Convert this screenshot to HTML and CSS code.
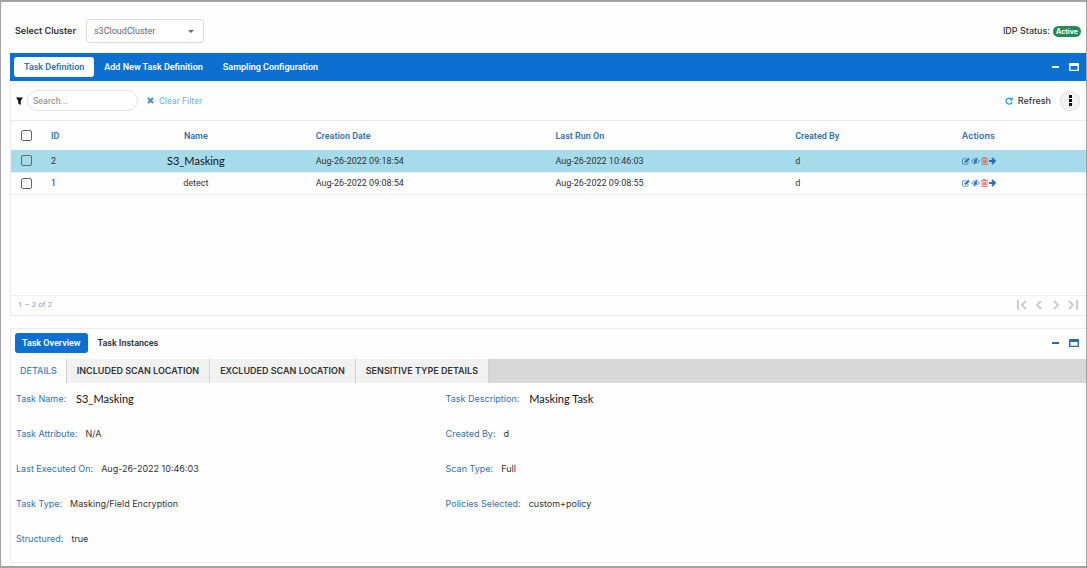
FILE: index.html
```html
<!DOCTYPE html>
<html lang="en">
<head>
    <meta charset="UTF-8">
    <meta name="viewport" content="width=device-width, initial-scale=1.0">
    <title>Task Definition</title>
    <link rel="stylesheet" href="styles.css">
</head>
<body>
    <svg class="sprite" aria-hidden="true">
        <symbol id="edit" viewBox="0 0 16 16">
            <path d="M12 9.5V13a1.5 1.5 0 0 1-1.500 1.500h-8A1.500 1.500 0 0 1 1 13V5a1.500 1.500 0 0 1 1.500-1.500H9" fill="none" stroke="currentColor" stroke-width="1.400"/>
            <path d="M5.500 11.500V8.500L12.500 1.500l3 3-7 7z" fill="currentColor"/>
        </symbol>
        <symbol id="eye" viewBox="0 0 18 16">
            <path d="M1 8q8-9 16 0q-8 9-16 0z" fill="none" stroke="currentColor" stroke-width="1.600"/>
            <circle cx="9" cy="8" r="3.200" fill="currentColor"/>
            <path d="M6 15L12 1" stroke="currentColor" stroke-width="1.800"/>
        </symbol>
        <symbol id="trash" viewBox="0 0 14 16">
            <path d="M0 3.500h14M4.500 3V1h5v2M2 4v11h10V4M5 6.500v6M7 6.500v6M9 6.500v6" fill="none" stroke="currentColor" stroke-width="1.700"/>
        </symbol>
        <symbol id="arrow" viewBox="0 0 14 16">
            <path d="M0 8h12M6 2l6 6-6 6" fill="none" stroke="currentColor" stroke-width="3.600"/>
        </symbol>
        <symbol id="window" viewBox="0 0 20 16">
            <path d="M0 1.500A1.500 1.500 0 0 1 1.500 0h17A1.500 1.500 0 0 1 20 1.500v13a1.500 1.500 0 0 1-1.500 1.500h-17A1.500 1.500 0 0 1 0 14.500zM3 6v7.500h14V6z" fill="currentColor" fill-rule="evenodd"/>
        </symbol>
    </svg>

    <div class="page">
        <header class="topbar">
            <div class="cluster">
                <label for="cluster">Select Cluster</label>
                <div class="select-box">
                    <select id="cluster">
                        <option>s3CloudCluster</option>
                    </select>
                </div>
            </div>
            <div class="status">IDP Status: <span class="badge">Active</span></div>
        </header>

        <section class="panel">
            <div class="panel-bar panel-bar-blue">
                <nav class="tabs">
                    <button class="tab active">Task Definition</button>
                    <button class="tab">Add New Task Definition</button>
                    <button class="tab">Sampling Configuration</button>
                </nav>
                <div class="window-tools">
                    <button class="minimize" aria-label="Minimize"></button>
                    <button aria-label="Maximize"><svg width="10" height="8"><use href="#window"/></svg></button>
                </div>
            </div>

            <div class="toolbar">
                <svg class="filter" width="7" height="8" viewBox="0 0 14 16"><path d="M0 1h14L9.500 7.500V16l-5-3V7.500z" fill="currentColor"/></svg>
                <input type="text" class="search" placeholder="Search..." aria-label="Search">
                <button class="clear"><svg width="7" height="7" viewBox="0 0 14 14"><path d="M2 2l10 10M12 2L2 12" stroke="currentColor" stroke-width="4"/></svg>Clear Filter</button>
                <button class="refresh"><svg width="8" height="8" viewBox="0 0 16 16"><path d="M13 4.500A6 6 0 1 0 14 10" fill="none" stroke="currentColor" stroke-width="2.800"/><path d="M15.500 0v7H9z" fill="currentColor"/></svg>Refresh</button>
                <button class="more" aria-label="More options"><svg width="3" height="11" viewBox="0 0 3 11"><path d="M0 0h3v3H0zM0 4h3v3H0zM0 8h3v3H0z" fill="currentColor"/></svg></button>
            </div>

            <div class="table-area">
                <table>
                    <colgroup>
                        <col class="col-check">
                        <col class="col-id">
                        <col class="col-wide">
                        <col class="col-wide">
                        <col class="col-wide">
                        <col class="col-by">
                        <col>
                    </colgroup>
                    <thead>
                        <tr>
                            <th class="check"><input type="checkbox" aria-label="Select all"></th>
                            <th>ID</th>
                            <th class="name">Name</th>
                            <th>Creation Date</th>
                            <th>Last Run On</th>
                            <th>Created By</th>
                            <th class="actions-head">Actions</th>
                        </tr>
                    </thead>
                    <tbody>
                        <tr class="selected">
                            <td class="check"><input type="checkbox" aria-label="Select task 2"></td>
                            <td>2</td>
                            <td class="name big">S3_Masking</td>
                            <td>Aug-26-2022 09:18:54</td>
                            <td>Aug-26-2022 10:46:03</td>
                            <td>d</td>
                            <td>
                                <div class="actions">
                                    <button aria-label="Edit"><svg width="8" height="8"><use href="#edit"/></svg></button>
                                    <button aria-label="Hide"><svg width="9" height="8"><use href="#eye"/></svg></button>
                                    <button class="delete" aria-label="Delete"><svg width="7" height="8"><use href="#trash"/></svg></button>
                                    <button aria-label="Run"><svg width="7" height="8"><use href="#arrow"/></svg></button>
                                </div>
                            </td>
                        </tr>
                        <tr>
                            <td class="check"><input type="checkbox" aria-label="Select task 1"></td>
                            <td>1</td>
                            <td class="name">detect</td>
                            <td>Aug-26-2022 09:08:54</td>
                            <td>Aug-26-2022 09:08:55</td>
                            <td>d</td>
                            <td>
                                <div class="actions">
                                    <button aria-label="Edit"><svg width="8" height="8"><use href="#edit"/></svg></button>
                                    <button aria-label="Hide"><svg width="9" height="8"><use href="#eye"/></svg></button>
                                    <button class="delete" aria-label="Delete"><svg width="7" height="8"><use href="#trash"/></svg></button>
                                    <button aria-label="Run"><svg width="7" height="8"><use href="#arrow"/></svg></button>
                                </div>
                            </td>
                        </tr>
                    </tbody>
                </table>
            </div>

            <div class="pager">
                <span>1 – 2 of 2</span>
                <div class="pager-buttons">
                    <button aria-label="First page"><svg width="10" height="10" viewBox="0 0 10 10"><path d="M1 0v10M9 1L5 5l4 4"/></svg></button>
                    <button aria-label="Previous page"><svg width="10" height="10" viewBox="0 0 10 10"><path d="M7 1L3 5l4 4"/></svg></button>
                    <button aria-label="Next page"><svg width="10" height="10" viewBox="0 0 10 10"><path d="M3 1l4 4-4 4"/></svg></button>
                    <button aria-label="Last page"><svg width="10" height="10" viewBox="0 0 10 10"><path d="M1 1l4 4-4 4M9 0v10"/></svg></button>
                </div>
            </div>
        </section>

        <section class="panel">
            <div class="panel-bar">
                <nav class="tabs">
                    <button class="tab active">Task Overview</button>
                    <button class="tab">Task Instances</button>
                </nav>
                <div class="window-tools">
                    <button class="minimize" aria-label="Minimize"></button>
                    <button aria-label="Maximize"><svg width="10" height="8"><use href="#window"/></svg></button>
                </div>
            </div>

            <nav class="subtabs">
                <button class="subtab active">DETAILS</button>
                <button class="subtab">INCLUDED SCAN LOCATION</button>
                <button class="subtab">EXCLUDED SCAN LOCATION</button>
                <button class="subtab">SENSITIVE TYPE DETAILS</button>
            </nav>

            <div class="details">
                <dl>
                    <div><dt>Task Name:</dt><dd class="big">S3_Masking</dd></div>
                    <div><dt>Task Attribute:</dt><dd>N/A</dd></div>
                    <div><dt>Last Executed On:</dt><dd>Aug-26-2022 10:46:03</dd></div>
                    <div><dt>Task Type:</dt><dd>Masking/Field Encryption</dd></div>
                    <div><dt>Structured:</dt><dd>true</dd></div>
                </dl>
                <dl>
                    <div><dt>Task Description:</dt><dd class="big">Masking Task</dd></div>
                    <div><dt>Created By:</dt><dd>d</dd></div>
                    <div><dt>Scan Type:</dt><dd>Full</dd></div>
                    <div><dt>Policies Selected:</dt><dd>custom+policy</dd></div>
                </dl>
            </div>
        </section>
    </div>
</body>
</html>
```
FILE: styles.css
```css
* {
    box-sizing: border-box;
}
body {
    margin: 0;
    font-family: Inter, 'Open Sans', sans-serif;
    font-size: 9px;
    line-height: 12px;
    color: #333;
    background: #fefefe;
}
button {
    border: none;
    background: none;
    padding: 0;
    font: inherit;
    color: inherit;
    cursor: pointer;
}
svg {
    display: block;
}
.sprite {
    display: none;
}
.page {
    min-height: 100vh;
    border: 1px solid #a3a3a3;
    border-width: 2px 1px 2px 1px;
    padding: 17px 0 3px 9px;
}
.topbar {
    display: flex;
    align-items: center;
    justify-content: space-between;
    padding: 0 5px;
    margin-bottom: 10px;
}
.cluster {
    display: flex;
    align-items: center;
    gap: 10px;
    font-weight: 600;
}
.select-box {
    position: relative;
}
.select-box::after {
    content: '';
    position: absolute;
    right: 10px;
    top: 11px;
    border: 3px solid transparent;
    border-top-color: #666;
}
.select-box select {
    appearance: none;
    width: 118px;
    height: 24px;
    padding: 0 7px;
    border: 1px solid #ddd;
    border-radius: 3px;
    background: #fff;
    font: 9px Roboto, sans-serif;
    color: #666;
}
.status {
    display: flex;
    align-items: center;
    gap: 3px;
    font-weight: 500;
}
.badge {
    padding: 0 3px;
    border-radius: 6px;
    background: #258a55;
    color: #fff;
    font-size: 7px;
    font-weight: 700;
    line-height: 11px;
}
.panel {
    border: 1px solid #ececec;
    border-right: none;
}
.panel + .panel {
    margin-top: 12px;
}
.panel-bar {
    display: flex;
    align-items: center;
    justify-content: space-between;
    height: 30px;
    padding: 0 7px 2px 4px;
}
.panel-bar-blue {
    height: 28px;
    margin: -1px 0 0 -1px;
    padding-bottom: 0;
    background: #0b70cf;
    color: #fff;
}
.tabs {
    display: flex;
}
.tab {
    height: 20px;
    padding: 0 10px;
    border-radius: 3px;
    font: 600 9px Roboto, sans-serif;
}
.tab.active {
    padding: 0 7px;
    background: #0b70cf;
    color: #fff;
}
.panel-bar-blue .tab.active {
    padding: 0 10px;
    background: #fff;
    color: #3373ac;
}
.window-tools {
    display: flex;
    align-items: center;
    gap: 10px;
    color: #2b6dac;
}
.panel-bar-blue .window-tools {
    color: #fff;
}
.minimize {
    width: 7px;
    height: 2px;
    background: currentColor;
}
.toolbar {
    display: flex;
    align-items: center;
    height: 40px;
    padding: 0 6px 0 5px;
    border-bottom: 1px solid #e8e8e8;
}
.filter {
    color: #111;
}
.search {
    width: 111px;
    height: 21px;
    margin: 0 9px 0 4px;
    padding: 0 5px;
    border: 1px solid #e2e2e2;
    border-radius: 11px;
    background: #fff;
    font: 9px Roboto, sans-serif;
}
.search::placeholder {
    color: #888;
}
.clear,
.refresh {
    display: flex;
    align-items: center;
    gap: 5px;
}
.clear {
    color: #7aaed4;
    font-family: Roboto, sans-serif;
}
.clear svg {
    color: #4c8fc4;
}
.refresh {
    margin-left: auto;
    font-weight: 500;
}
.refresh svg {
    color: #25a9c4;
}
.more {
    display: flex;
    align-items: center;
    justify-content: center;
    width: 20px;
    height: 20px;
    margin-left: 9px;
    border: 1px solid #ddd;
    border-radius: 50%;
    background: #f3f3f3;
    color: #111;
}
.table-area {
    min-height: 174px;
}
table {
    width: 100%;
    table-layout: fixed;
    border-collapse: collapse;
}
.col-check {
    width: 40px;
}
.col-id {
    width: 25px;
}
.col-wide {
    width: 22.3%;
}
.col-by {
    width: 15.5%;
}
th,
td {
    padding: 0;
    text-align: left;
    white-space: nowrap;
}
th {
    height: 29px;
    font: 600 9px Roboto, sans-serif;
    color: #3373ac;
}
td {
    height: 22px;
    font-family: Roboto, sans-serif;
}
tbody tr {
    border-bottom: 1px solid #eee;
}
.selected {
    background: #a6dbec;
}
.name {
    text-align: center;
}
.check {
    padding-left: 10px;
}
.check input {
    appearance: none;
    display: block;
    width: 11px;
    height: 11px;
    margin: 0;
    border: 1px solid #666;
    border-radius: 2px;
}
.big {
    font-family: Lato, sans-serif;
    font-size: 11px;
    color: #111;
}
.actions-head {
    font-family: Inter, sans-serif;
}
.actions {
    display: flex;
    align-items: center;
    gap: 1px;
    color: #2870b5;
}
.actions .delete {
    color: #df5d66;
}
.pager {
    display: flex;
    align-items: center;
    justify-content: space-between;
    height: 20px;
    padding: 0 8px 2px 7px;
    border-top: 1px solid #eee;
    font-family: Roboto, sans-serif;
    font-size: 8px;
    color: #999;
}
.pager-buttons {
    display: flex;
    gap: 7px;
}
.pager-buttons path {
    fill: none;
    stroke: #ccc;
    stroke-width: 2;
}
.subtabs {
    display: flex;
    background: #d8d8d8;
}
.subtab {
    height: 24px;
    padding: 0 10px;
    border-right: 1px solid #d0d0d0;
    background: #f2f2f2;
    font-weight: 600;
}
.subtab.active {
    padding: 0 9px;
    background: #fefefe;
    color: #3c82bd;
    font-weight: 500;
}
.details {
    display: grid;
    grid-template-columns: 2fr 3fr;
    column-gap: 6px;
    padding: 10px 5px 17px;
}
.details dl {
    display: flex;
    flex-direction: column;
    gap: 23px;
    margin: 0;
}
.details dl div {
    display: flex;
    gap: 8px;
}
.details dt {
    color: #3373ac;
}
.details dd {
    margin: 0;
}
.details dd.big {
    padding-left: 2px;
}
```
